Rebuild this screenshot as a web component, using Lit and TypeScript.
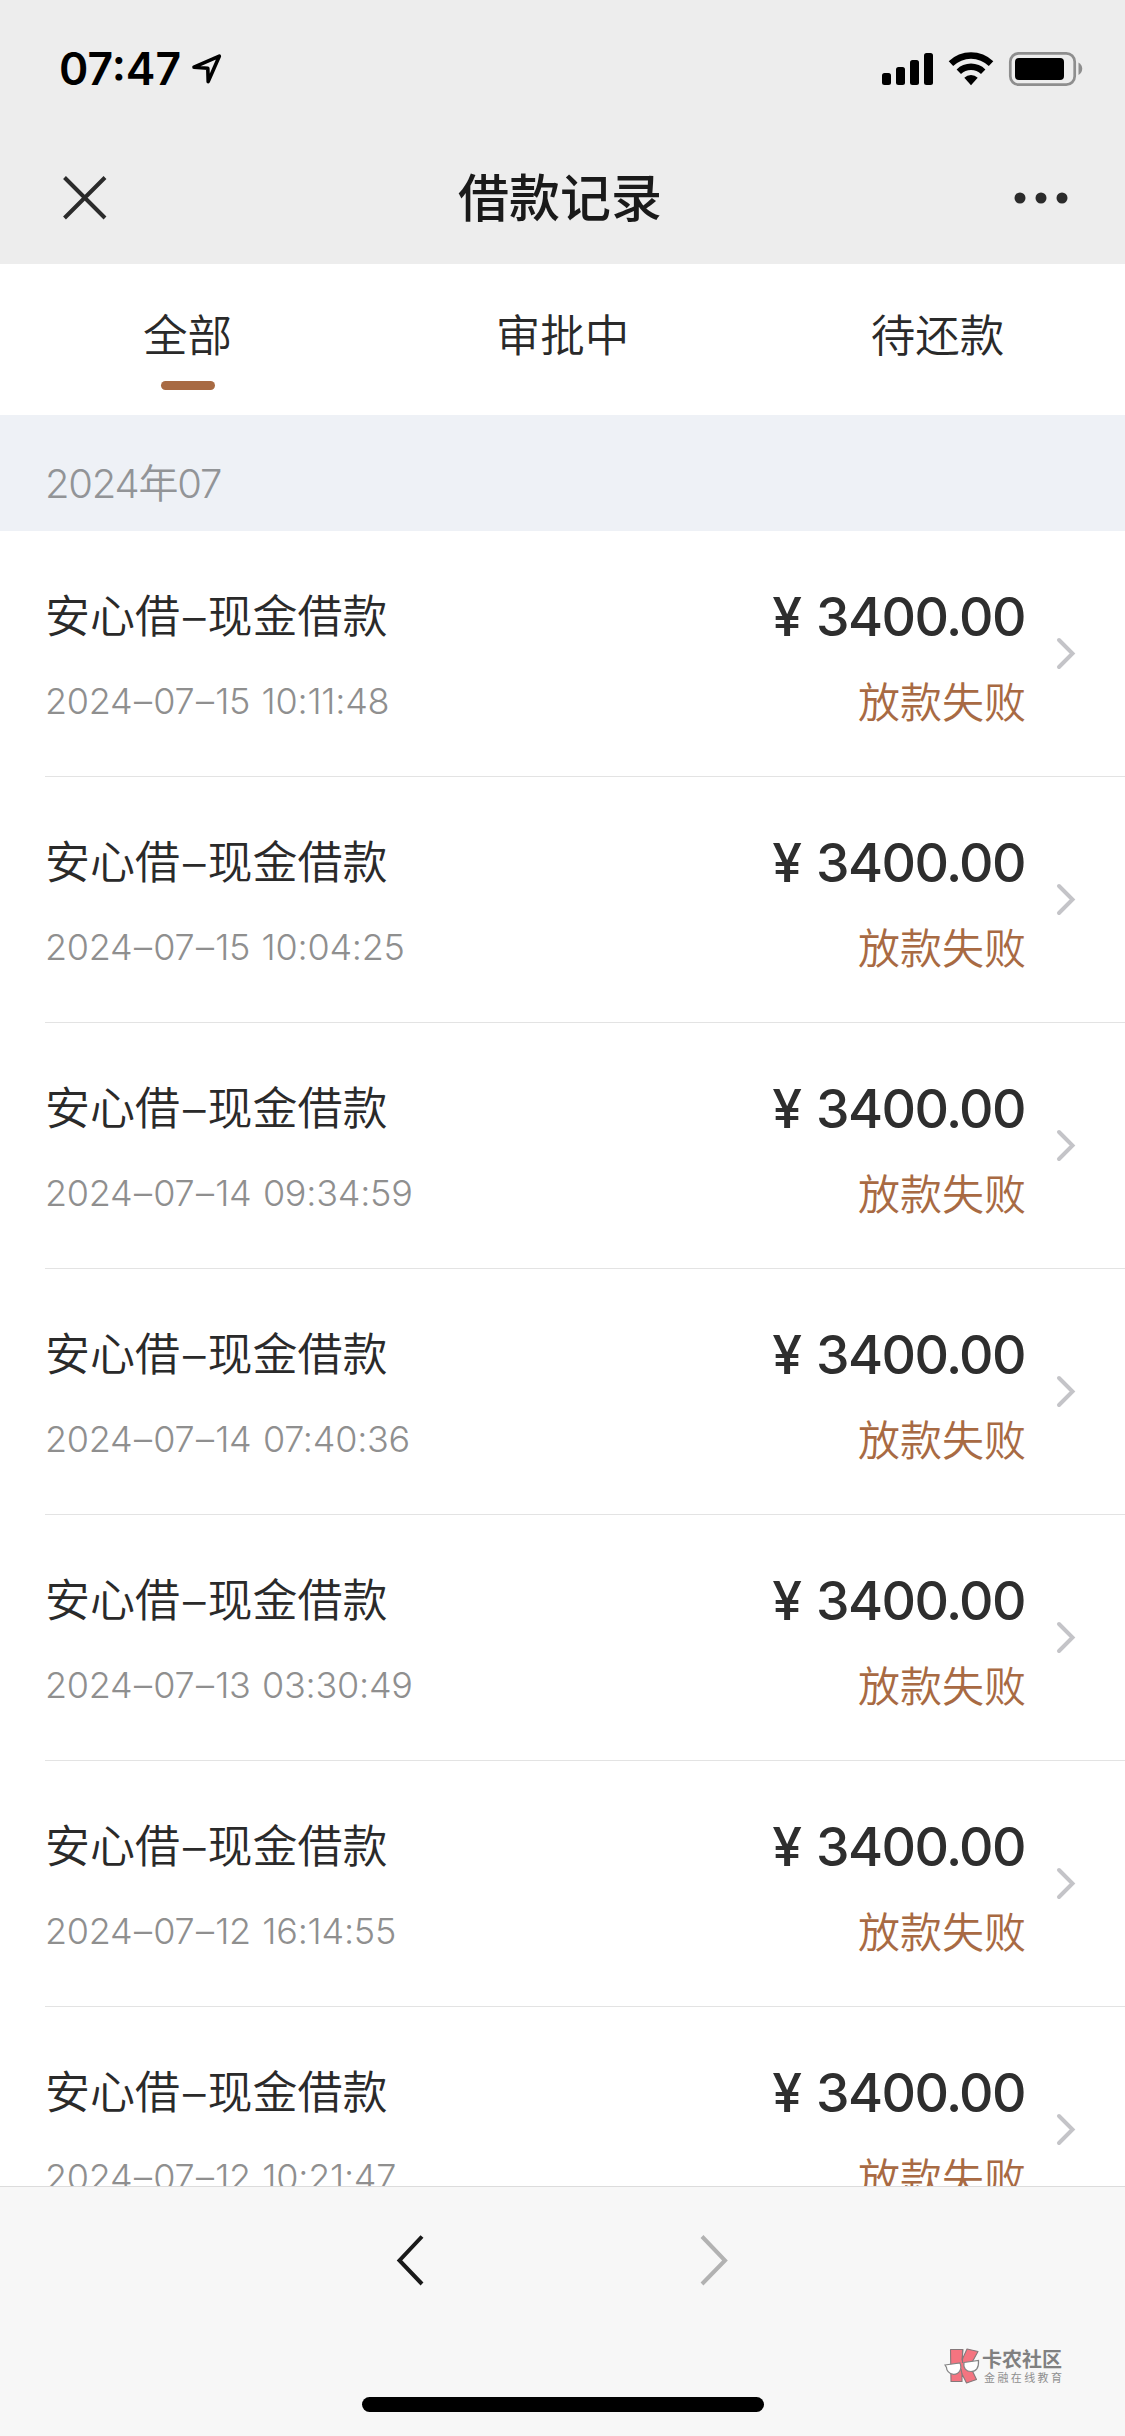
import { LitElement, html, css, svg } from "lit";
import { customElement, property, state } from "lit/decorators.js";
import { classMap } from "lit/directives/class-map.js";

interface LoanRecord {
  name: string;
  time: string;
  amount: string;
  status: string;
}

const record = (time: string): LoanRecord => ({
  name: "安心借–现金借款",
  time,
  amount: "3400.00",
  status: "放款失败",
});

const RECORDS: LoanRecord[] = [
  record("2024–07–15 10:11:48"),
  record("2024–07–15 10:04:25"),
  record("2024–07–14 09:34:59"),
  record("2024–07–14 07:40:36"),
  record("2024–07–13 03:30:49"),
  record("2024–07–12 16:14:55"),
  record("2024–07–12 10:21:47"),
];

/** Wraps every dash of a label so that it can be spaced on its own. */
const withDashes = (text: string) =>
  text.split("–").map((part, i) => (i ? html`<span class="dash">–</span>${part}` : part));

@customElement("status-bar")
class StatusBar extends LitElement {
  static styles = css`
    :host {
      display: flex;
      justify-content: space-between;
      height: 132px;
      padding: 0 42px 0 59px;
      box-sizing: border-box;
      color: #000;
    }
    .left {
      display: flex;
      align-items: flex-start;
      padding-top: 39px;
    }
    .time {
      font-size: 44.5px;
      line-height: 60px;
      font-weight: 600;
      width: 132px;
      white-space: nowrap;
    }
    .arrow {
      margin-top: 14px;
    }
    .right {
      display: flex;
      align-items: flex-start;
      padding-top: 51px;
    }
    svg {
      display: block;
    }
  `;

  render() {
    return html`
      <div class="left">
        <span class="time">07:47</span>
        <svg class="arrow" width="32" height="33" viewBox="0 0 32 33">
          <path
            d="M28.3 3.2 17.2 28.6 16.8 15.2 3 14.2Z"
            fill="none"
            stroke="#000"
            stroke-width="3.6"
            stroke-linejoin="round"
          />
        </svg>
      </div>
      <div class="right">
        <svg width="202" height="36" viewBox="0 0 202 36">
          <g fill="#000">
            <rect x="1" y="22" width="9" height="12" rx="2.5" />
            <rect x="15" y="16" width="9" height="18" rx="2.5" />
            <rect x="29" y="9" width="9" height="25" rx="2.5" />
            <rect x="43" y="2" width="9" height="32" rx="2.5" />
            <path d="M67.7 10.3A32 32 0 0 1 112.3 10.3L107.8 15A25.5 25.5 0 0 0 72.2 15Z" />
            <path d="M75.6 18.4A20.6 20.6 0 0 1 104.4 18.4L100 23A14.2 14.2 0 0 0 80 23Z" />
            <path d="M83.3 26.7A9.5 9.5 0 0 1 96.7 26.7L90 34.2Z" />
            <rect x="134" y="7" width="49" height="22" rx="4" />
          </g>
          <rect x="129.3" y="2.3" width="64.4" height="31.4" rx="8.5" fill="none" stroke="#8e8e8e" stroke-width="2.7" />
          <path d="M197.5 11.5C202.500 14 202.500 21.500 197.500 24Z" fill="#8e8e8e" />
        </svg>
      </div>
    `;
  }
}

@customElement("nav-bar")
class NavBar extends LitElement {
  @property() heading = "";

  static styles = css`
    :host {
      display: grid;
      grid-template-columns: 1fr auto 1fr;
      align-items: center;
      height: 132px;
      padding: 0 57px 0 62px;
      box-sizing: border-box;
    }
    .title {
      font-size: 51px;
      line-height: 72px;
      font-weight: 500;
      color: #1a1a1a;
      margin-right: 10px;
      padding-top: 2px;
    }
    .more {
      justify-self: end;
    }
    svg {
      display: block;
    }
  `;

  render() {
    return html`
      <svg width="46" height="46" viewBox="0 0 46 46">
        <path d="M2.5 2.5 43 43M43 2.5 2.5 43" stroke="#2b2b2b" stroke-width="4" fill="none" />
      </svg>
      <span class="title">${this.heading}</span>
      <svg class="more" width="54" height="12" viewBox="0 0 54 12">
        <g fill="#2b2b2b">
          <circle cx="6" cy="6" r="5.5" />
          <circle cx="27" cy="6" r="5.5" />
          <circle cx="48" cy="6" r="5.5" />
        </g>
      </svg>
    `;
  }
}

@customElement("filter-tabs")
class FilterTabs extends LitElement {
  @state() private active = 0;
  private labels = ["全部", "审批中", "待还款"];

  static styles = css`
    :host {
      display: grid;
      grid-template-columns: repeat(3, 1fr);
      height: 151px;
      background: #fff;
    }
    .tab {
      display: flex;
      flex-direction: column;
      align-items: center;
      padding-top: 40px;
      font-size: 44.5px;
      line-height: 64px;
      font-weight: 350;
      color: #2a2a2a;
    }
    .tab::after {
      content: "";
      width: 54px;
      height: 9px;
      margin-top: 13px;
      border-radius: 4.5px;
    }
    .tab.active::after {
      background: #a86a43;
    }
  `;

  render() {
    return this.labels.map(
      (label, i) => html`
        <div class=${classMap({ tab: true, active: i === this.active })} @click=${() => (this.active = i)}>
          ${label}
        </div>
      `
    );
  }
}

@customElement("loan-row")
class LoanRow extends LitElement {
  @property({ attribute: false }) item!: LoanRecord;

  static styles = css`
    :host {
      display: flex;
      justify-content: space-between;
      height: 246px;
      margin-left: 45px;
      padding: 55px 49px 0 0;
      box-sizing: border-box;
      border-bottom: 1px solid #e3e3e3;
    }
    .info,
    .right,
    .sum {
      display: flex;
      white-space: nowrap;
    }
    .info,
    .sum {
      flex-direction: column;
    }
    .name {
      font-size: 45px;
      line-height: 62px;
      font-weight: 350;
      color: #2a2a2a;
    }
    .name .dash {
      padding: 0 2px 0 3px;
    }
    .time {
      margin-top: 28px;
      font-size: 36px;
      line-height: 50px;
      font-weight: 330;
      letter-spacing: -0.25px;
      word-spacing: 1.5px;
      color: #8f8f8f;
    }
    .time .dash {
      padding: 0 1.5px;
    }
    .right {
      gap: 31px;
    }
    .sum {
      align-items: flex-end;
    }
    .amount {
      display: flex;
      gap: 14px;
      font-size: 53.5px;
      line-height: 62px;
      font-weight: 500;
      color: #2e2e2e;
    }
    .figure {
      letter-spacing: -1.6px;
    }
    .status {
      margin: 25px -1px 0 0;
      font-size: 42px;
      line-height: 60px;
      font-weight: 350;
      color: #a86a43;
    }
    .chevron {
      display: block;
      margin-top: 50px;
    }
  `;

  render() {
    const { name, time, amount, status } = this.item;
    return html`
      <div class="info">
        <span class="name">${withDashes(name)}</span>
        <span class="time">${withDashes(time)}</span>
      </div>
      <div class="right">
        <div class="sum">
          <span class="amount"><span>¥</span><span class="figure">${amount}</span></span>
          <span class="status">${status}</span>
        </div>
        <svg class="chevron" width="20" height="34" viewBox="0 0 20 34">
          <path d="M3 4 16.5 17.5 3 31" fill="none" stroke="#c4c4c8" stroke-width="4" stroke-linecap="round" />
        </svg>
      </div>
    `;
  }
}

@customElement("brand-mark")
class BrandMark extends LitElement {
  static styles = css`
    :host {
      display: flex;
      gap: 2px;
    }
    .logo {
      display: block;
    }
    .words {
      display: flex;
      flex-direction: column;
      white-space: nowrap;
      padding-top: 1px;
    }
    .main {
      font-size: 20px;
      line-height: 22px;
      font-weight: 700;
      color: #808080;
    }
    .sub {
      margin-left: 2px;
      font-size: 11px;
      line-height: 14px;
      letter-spacing: 2.4px;
      color: #8f8f8f;
    }
  `;

  render() {
    return html`
      <svg class="logo" width="36" height="36" viewBox="0 0 36 36">
        ${svg`
          <g fill="#f47480" stroke="#85787a" stroke-width="1.1" stroke-linejoin="round">
            <path d="M6.5 1.500H19L18 12 23 1 34 3.500 26 18 32.500 31.500 22.500 35 18 26V33.500H7Z" />
            <path d="M18.500 2V15M18 26 17 21" fill="none" />
          </g>
          <g fill="#fff" stroke="#858585" stroke-width="1.2">
            <path d="M1 17 16 15C18.500 21 15 26.500 9.500 26.300 4.500 26 2.500 22 2.500 19.500Z" />
            <path d="M20 14.500 34.500 12.500C35 20 32 23.500 27 23.500 22 23.500 19 20 20 14.500Z" />
          </g>
        `}
      </svg>
      <div class="words">
        <span class="main">卡农社区</span>
        <span class="sub">金融在线教育</span>
      </div>
    `;
  }
}

@customElement("app-root")
class AppRoot extends LitElement {
  static styles = css`
    :host {
      display: flex;
      flex-direction: column;
      width: 1125px;
      height: 2436px;
      overflow: hidden;
      background: #fff;
      font-family: Inter, "Noto Sans CJK SC", sans-serif;
    }
    .head {
      flex: none;
      background: #ededed;
    }
    .month {
      flex: none;
      height: 116px;
      padding: 9px 45px 0;
      box-sizing: border-box;
      background: #eef1f6;
      color: #929497;
      font-size: 40px;
      line-height: 120px;
      font-weight: 350;
      letter-spacing: -1.2px;
    }
    .list {
      flex: 1;
      min-height: 0;
      overflow: hidden;
    }
    .foot {
      position: relative;
      flex: none;
      display: flex;
      flex-direction: column;
      align-items: center;
      justify-content: space-between;
      height: 250px;
      padding: 46px 0 24px;
      box-sizing: border-box;
      border-top: 1px solid #dcdcdc;
      background: #f7f7f7;
    }
    .pager {
      display: flex;
      gap: 273px;
    }
    .pager svg {
      display: block;
    }
    .home {
      width: 402px;
      height: 15px;
      border-radius: 7.5px;
      background: #000;
    }
    .brand {
      position: absolute;
      left: 944px;
      top: 161px;
    }
  `;

  render() {
    return html`
      <div class="head">
        <status-bar></status-bar>
        <nav-bar heading="借款记录"></nav-bar>
      </div>
      <filter-tabs></filter-tabs>
      <div class="month">2024年07</div>
      <div class="list">${RECORDS.map((item) => html`<loan-row .item=${item}></loan-row>`)}</div>
      <div class="foot">
        <div class="pager">
          <svg width="30" height="54" viewBox="0 0 30 54">
            <path d="M26 3.5 3.5 27.5 26 51" fill="none" stroke="#1a1a1a" stroke-width="4" />
          </svg>
          <svg width="30" height="54" viewBox="0 0 30 54">
            <path d="M3 3.5 26 27.5 3 51" fill="none" stroke="#b2b2b2" stroke-width="4" />
          </svg>
        </div>
        <div class="home"></div>
        <brand-mark class="brand"></brand-mark>
      </div>
    `;
  }
}
